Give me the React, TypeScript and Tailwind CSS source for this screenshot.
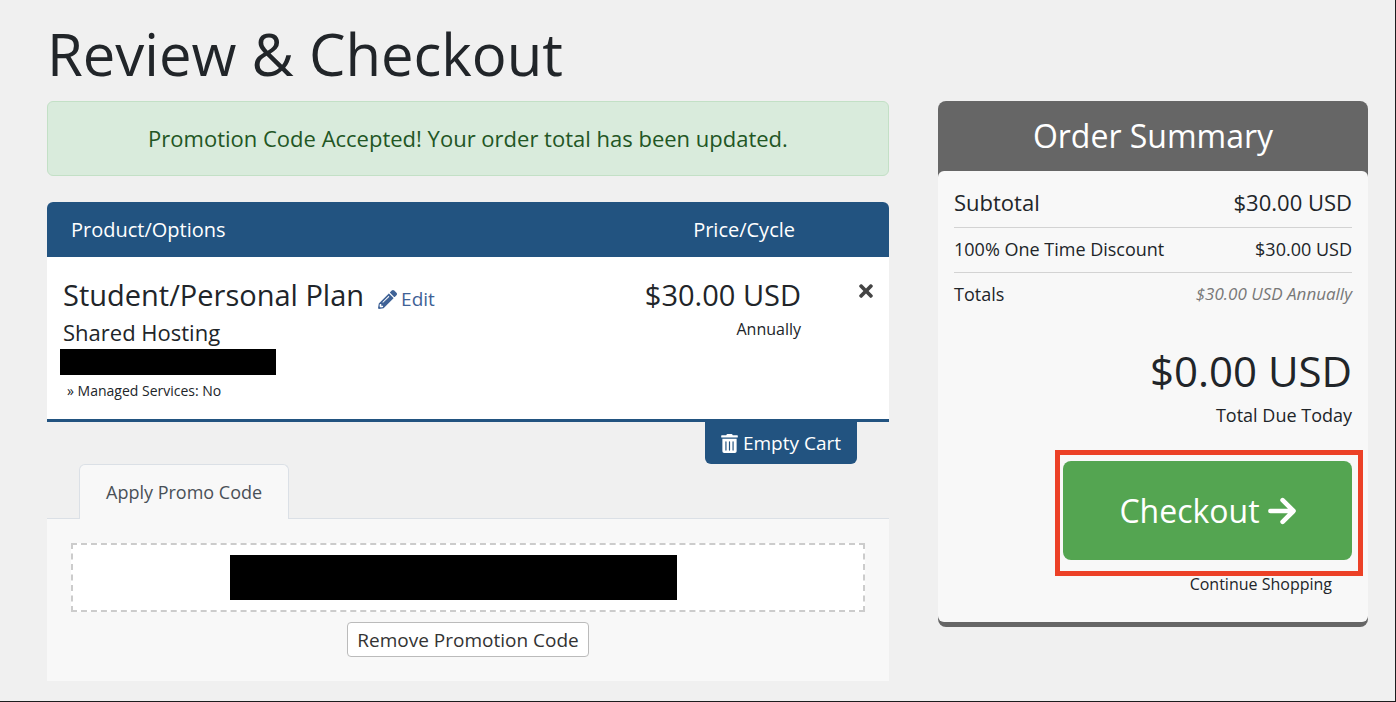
import React from 'react';
import { FaPencilAlt, FaTimes, FaTrashAlt } from 'react-icons/fa';

interface CartItem {
    name: string;
    group: string;
    price: string;
    cycle: string;
    options: string[];
}

const ITEMS: CartItem[] = [
    {
        name: 'Student/Personal Plan',
        group: 'Shared Hosting',
        price: '$30.00 USD',
        cycle: 'Annually',
        options: ['Managed Services: No'],
    },
];

const ArrowIcon: React.FC = () => (
    <svg
        viewBox="0 0 28 28"
        className="size-7"
        fill="none"
        stroke="currentColor"
        strokeWidth="4.6"
        strokeLinecap="round"
        strokeLinejoin="round"
        aria-hidden="true"
    >
        <path d="M2.4 14H25M14.6 3.2L25.5 14L14.6 24.8" />
    </svg>
);

const CartTable: React.FC<{ items: CartItem[] }> = ({ items }) => (
    <div className="overflow-hidden rounded-t-md border-b-[3px] border-[#225380] bg-white">
        <table className="w-full text-left">
            <thead className="bg-[#225380] text-[20px] leading-[55px] text-white">
                <tr>
                    <th className="pl-6 font-normal">Product/Options</th>
                    <th className="pr-[6px] text-right font-normal">Price/Cycle</th>
                    <th className="w-[88px]" aria-label="Remove" />
                </tr>
            </thead>
            <tbody>
                {items.map((item) => (
                    <tr key={item.name} className="align-top">
                        <td className="pt-[18px] pb-[18px] pl-4">
                            <div className="flex items-baseline gap-[14px]">
                                <span className="text-[29px] leading-10">{item.name}</span>
                                <a href="#edit" className="flex items-baseline gap-1 text-[19px] leading-8 text-[#3f6296]">
                                    <FaPencilAlt className="self-center" />
                                    Edit
                                </a>
                            </div>
                            <div className="text-[22px] leading-[34px]">{item.group}</div>
                            {/* Domain is hidden */}
                            <div className="-ml-[3px] h-[26px] w-[216px] bg-black" />
                            {item.options.map((option) => (
                                <div key={option} className="mt-1.5 ml-1 text-[14px] leading-5">» {option}</div>
                            ))}
                        </td>
                        <td className="pt-[18px] text-right">
                            <div className="text-[29px] leading-10">{item.price}</div>
                            <div className="text-[16px] leading-7">{item.cycle}</div>
                        </td>
                        <td className="pt-6 text-center">
                            <button type="button" aria-label="Remove item" className="ml-[42px] text-[20px] text-[#444]">
                                <FaTimes />
                            </button>
                        </td>
                    </tr>
                ))}
            </tbody>
        </table>
    </div>
);

const PromoPanel: React.FC = () => (
    <div>
        <div className="flex border-b border-[#dbe0e6] pl-8">
            <button type="button" className="-mb-px h-[55px] rounded-t-md border border-b-0 border-[#dbe0e6] bg-[#f8f8f8] px-[26px] text-[18px] text-[#495057]">
                Apply Promo Code
            </button>
        </div>
        <div className="bg-[#f8f8f8] p-6 text-center">
            <div className="border-2 border-dashed border-[#ccc] bg-white py-[10px]">
                <div className="ml-[157px] h-[45px] w-[447px] bg-black" />
            </div>
            <button type="button" className="mt-[10px] h-[35px] rounded border border-[#bbb] bg-white px-[9px] align-top text-[19px] leading-8 text-[#333]">
                Remove Promotion Code
            </button>
        </div>
    </div>
);

const OrderSummary: React.FC = () => (
    <aside className="rounded-lg bg-[#666] pb-[5px]">
        <h2 className="text-center text-[32px] leading-[70px] text-white">Order Summary</h2>
        <div className="rounded-md bg-[#f8f8f8] px-4 pt-2 pb-[26px]">
            <div className="flex justify-between border-b border-[#d3d3d3] pb-0.5 text-[22px] leading-[46px]">
                <span>Subtotal</span>
                <span>$30.00 USD</span>
            </div>
            <div className="flex justify-between border-b border-[#d3d3d3] pb-0.5 text-[18px] leading-[42px]">
                <span>100% One Time Discount</span>
                <span>$30.00 USD</span>
            </div>
            <div className="flex justify-between pb-0.5 text-[18px] leading-[42px]">
                <span>Totals</span>
                <span className="text-[17px] text-[#777] italic">$30.00 USD Annually</span>
            </div>
            <div className="mt-[26px] text-right">
                <div className="text-[42px] leading-[56px]">$0.00 USD</div>
                <div className="text-[18px] leading-8">Total Due Today</div>
            </div>
            <div className="mt-[30px] flex justify-end">
                <div className="relative">
                    <button type="button" className="flex h-[99px] w-[289px] items-center justify-center gap-2 rounded-lg bg-[#54a551] text-[32px] text-white">
                        Checkout
                        <ArrowIcon />
                    </button>
                    {/* Callout frame */}
                    <div className="pointer-events-none absolute -top-[11px] -right-[11px] -bottom-4 -left-2 border-5 border-[#ec4127]" />
                </div>
            </div>
            <div className="mt-3 pr-5 text-right text-[16px] leading-6">
                <a href="#shop">Continue Shopping</a>
            </div>
        </div>
    </aside>
);

export default function App() {
    return (
        <div className="min-h-screen border-r border-b border-[#1c1c1e] bg-[#f0f0f0] pt-[18px] pr-[27px] pb-5 pl-[47px] font-['Open_Sans',sans-serif] text-[#212529]">
            <h1 className="mb-[11px] text-[58px] leading-[72px]">Review &amp; Checkout</h1>
            <div className="grid grid-cols-[842fr_430fr] items-start gap-x-[49px]">
                <main>
                    <div role="alert" className="mb-[26px] rounded-md border border-[#c3e0c6] bg-[#d9ebdc] text-center text-[22px] leading-[73px] text-[#225624]">
                        Promotion Code Accepted! Your order total has been updated.
                    </div>
                    <CartTable items={ITEMS} />
                    <div className="flex justify-end pr-8">
                        <button type="button" className="flex h-[42px] items-center gap-[5px] rounded-b-md bg-[#225380] px-4 text-[19px] text-white">
                            <FaTrashAlt className="w-[17px]" />
                            Empty Cart
                        </button>
                    </div>
                    <PromoPanel />
                </main>
                <OrderSummary />
            </div>
        </div>
    );
}
